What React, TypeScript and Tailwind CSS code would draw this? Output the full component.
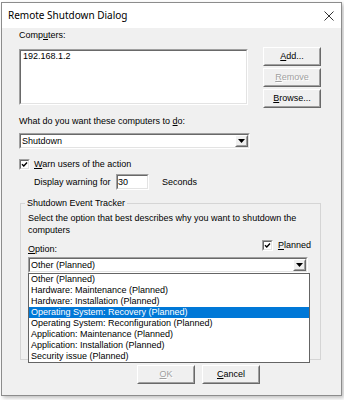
import type { ReactNode } from "react";

const sans = "font-['Liberation_Sans',Arial,sans-serif]";

function U({ children }: { children: ReactNode }) {
  return <span className="underline decoration-1 underline-offset-[1px]">{children}</span>;
}

function Sunken({ className = "", children }: { className?: string; children?: ReactNode }) {
  return (
    <div className={`border border-t-[#a0a0a0] border-l-[#a0a0a0] border-r-white border-b-white ${className}`}>
      <div className="h-full w-full border border-t-[#696969] border-l-[#696969] border-r-[#e3e3e3] border-b-[#e3e3e3] bg-white">
        {children}
      </div>
    </div>
  );
}

function Raised({ className = "", children }: { className?: string; children?: ReactNode }) {
  return (
    <div className={`border border-t-white border-l-white border-r-[#696969] border-b-[#696969] ${className}`}>
      <div className="flex h-full w-full items-center justify-center border border-t-[#f0f0f0] border-l-[#f0f0f0] border-r-[#a0a0a0] border-b-[#a0a0a0] bg-[#f0f0f0]">
        {children}
      </div>
    </div>
  );
}

function Button({ children, disabled = false }: { children: ReactNode; disabled?: boolean }) {
  return (
    <Raised className="h-[19px] w-[58px]">
      <span className={disabled ? "text-[#a0a0a0] [text-shadow:1px_1px_0_#ffffff]" : "text-black"}>{children}</span>
    </Raised>
  );
}

function Combo({ value, className = "" }: { value: string; className?: string }) {
  return (
    <Sunken className={`h-[16px] ${className}`}>
      <div className="flex h-full items-center">
        <span className="flex-1 pl-[1px]">{value}</span>
        <Raised className="h-full w-[13px]">
          <svg width="7" height="4" viewBox="0 0 7 4">
            <polygon points="0,0 7,0 3.5,4" fill="#000" />
          </svg>
        </Raised>
      </div>
    </Sunken>
  );
}

function Check() {
  return (
    <Sunken className="h-[11px] w-[11px] shrink-0">
      <svg viewBox="0 0 7 7" className="block h-full w-full">
        <path d="M1 3.2 L2.8 5 L6 1.6" fill="none" stroke="#000" strokeWidth="1.4" />
      </svg>
    </Sunken>
  );
}

const reasons = [
  "Other (Planned)",
  "Hardware: Maintenance (Planned)",
  "Hardware: Installation (Planned)",
  "Operating System: Recovery (Planned)",
  "Operating System: Reconfiguration (Planned)",
  "Application: Maintenance (Planned)",
  "Application: Installation (Planned)",
  "Security issue (Planned)",
];

export default function App() {
  return (
    <div className={`h-[400px] w-[344px] bg-white ${sans}`}>
      <div className="pl-[1px] pt-[2px]">
        <div className="flex h-[394px] w-[341px] flex-col border border-[#8c8c8c] bg-[#f0f0f0] shadow-[2px_2px_4px_rgba(0,0,0,0.25)]">
          {/* title bar */}
          <div className="flex h-[25px] shrink-0 items-center justify-between bg-white px-[6px]">
            <span className="font-['Noto_Sans',sans-serif] text-[10px] text-black">Remote Shutdown Dialog</span>
            <svg width="10" height="10" viewBox="0 0 10 10" className="mr-[1px]">
              <path d="M0.5 0.5 L9.5 9.5 M9.5 0.5 L0.5 9.5" stroke="#333" strokeWidth="1" />
            </svg>
          </div>

          <div className="flex flex-1 flex-col pl-[17px] text-[9px] leading-[11px] text-black">
            <div className="mt-[2px] h-[11px]">
              Comp<U>u</U>ters:
            </div>

            <div className="mt-[6px] flex items-start gap-[15px]">
              <Sunken className="mt-[2px] h-[56px] w-[229px]">
                <div className="pl-[2px]">192.168.1.2</div>
              </Sunken>
              <div className="flex flex-col gap-[2px]">
                <Button>
                  <U>A</U>dd...
                </Button>
                <Button disabled>
                  <U>R</U>emove
                </Button>
                <Button>
                  <U>B</U>rowse...
                </Button>
              </div>
            </div>

            <div className="mt-[8px] h-[11px]">
              What do you want these computers to <U>d</U>o:
            </div>
            <Combo value="Shutdown" className="mt-[6px] w-[231px]" />

            <div className="mt-[10px] flex h-[11px] items-center gap-[4px]">
              <Check />
              <span>
                <U>W</U>arn users of the action
              </span>
            </div>

            <div className="mt-[4px] ml-[15px] flex h-[16px] items-center">
              <span className="w-[82px]">Display warning for</span>
              <Sunken className="h-[16px] w-[33px]">
                <div className="pt-[1px]">30</div>
              </Sunken>
              <span className="ml-[13px]">Seconds</span>
            </div>

            {/* Shutdown Event Tracker */}
            <div className="relative mt-[13px] ml-[1px] h-[157px] w-[301px] border border-[#d5d5d5] pl-[7px] pr-[9px]">
              <span className="absolute left-[4px] top-[-6px] bg-[#f0f0f0] px-[2px]">Shutdown Event Tracker</span>
              <p className="mt-[8px] whitespace-nowrap leading-[12px]">
                Select the option that best describes why you want to shutdown the
                <br />
                computers
              </p>
              <div className="flex h-[21px] items-start justify-between">
                <span className="mt-[8px]">
                  <U>O</U>ption:
                </span>
                <div className="mt-[4px] flex items-center gap-[5px]">
                  <Check />
                  <span>
                    <U>P</U>lanned
                  </span>
                </div>
              </div>
              <Combo value="Other (Planned)" className="w-[280px]" />

              <div className="absolute left-[7px] top-[69px] z-10 h-[90px] w-[282px] border border-[#646464] bg-white">
                {reasons.map((r, i) => (
                  <div
                    key={r}
                    className={`h-[11px] whitespace-nowrap pl-[2px] leading-[11px] ${
                      i === 3 ? "bg-[#0078d7] text-white" : "text-black"
                    }`}
                  >
                    {r}
                  </div>
                ))}
              </div>
            </div>

            <div className="mt-[5px] ml-[118px] flex gap-[7px]">
              <Button disabled>
                <U>O</U>K
              </Button>
              <Button>
                <U>C</U>ancel
              </Button>
            </div>
          </div>
        </div>
      </div>
    </div>
  );
}
